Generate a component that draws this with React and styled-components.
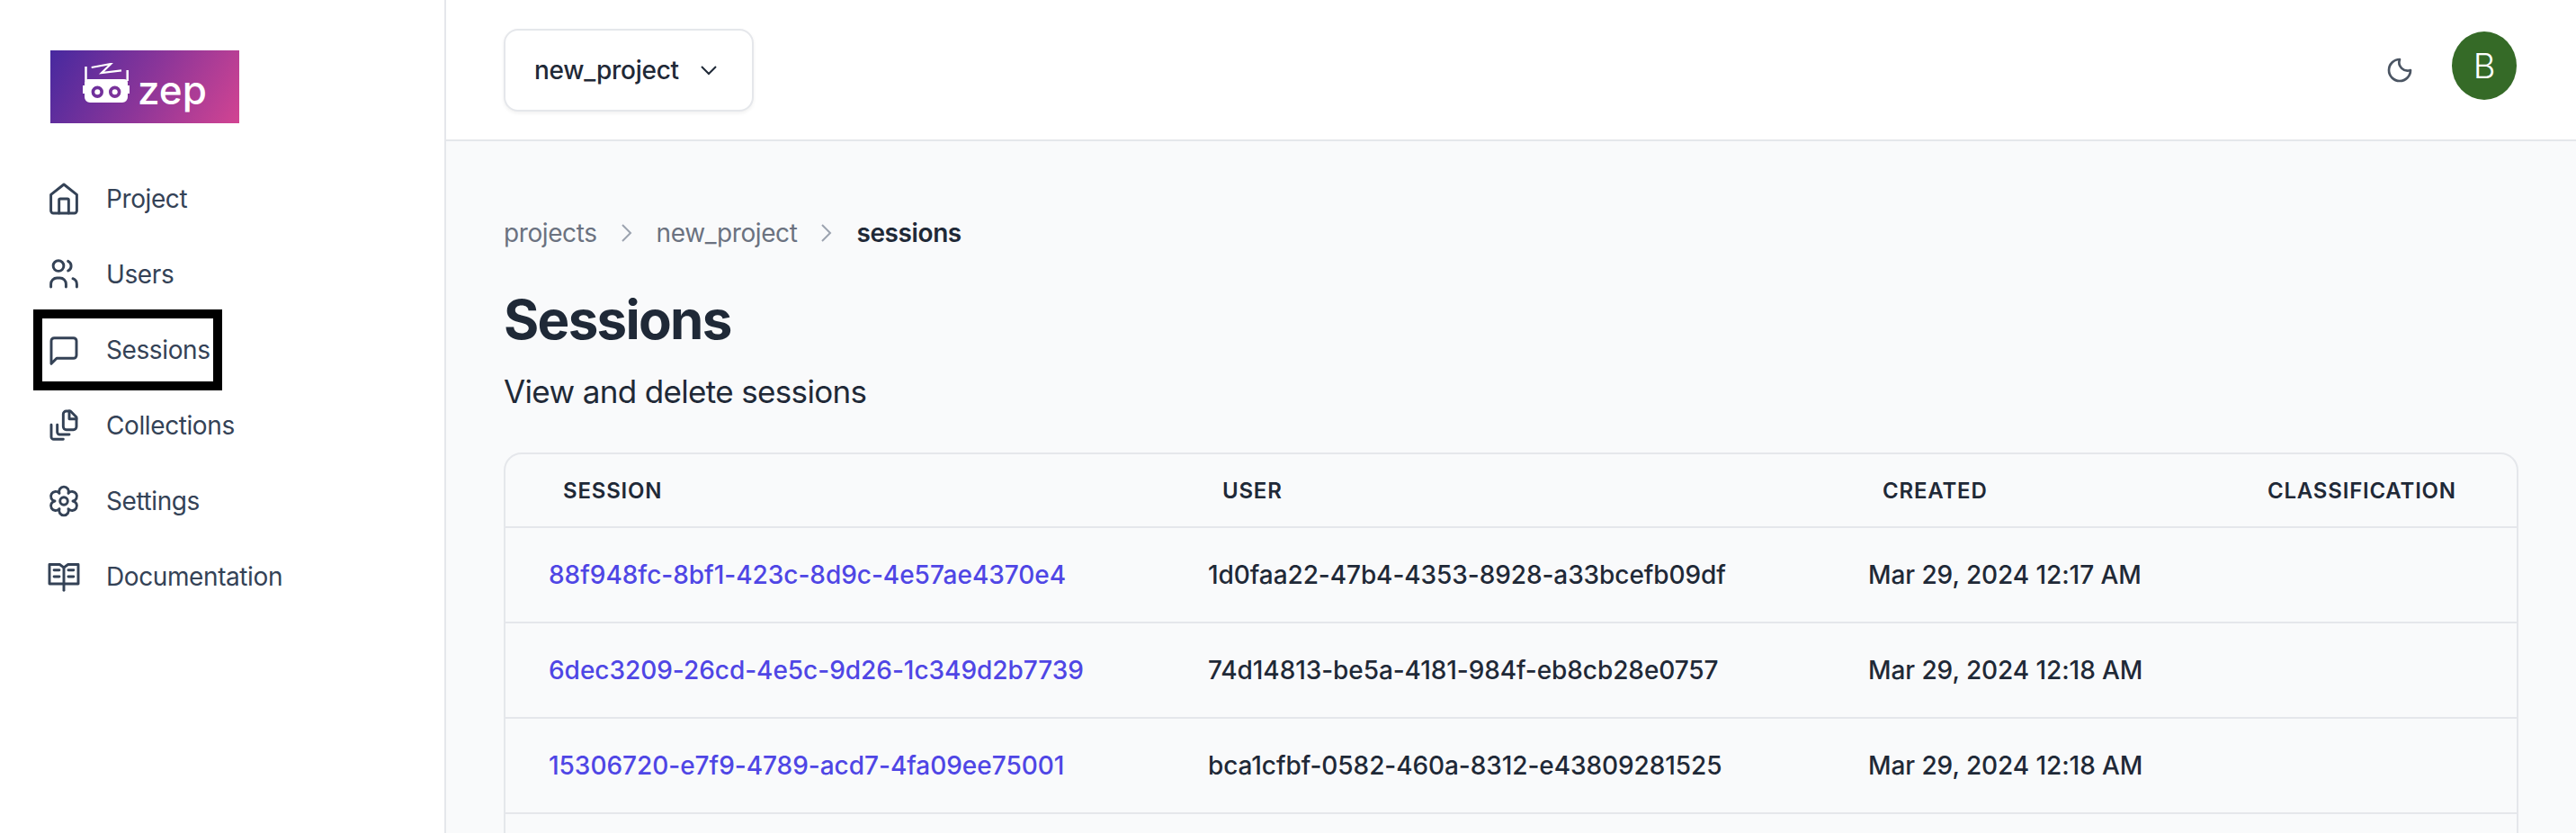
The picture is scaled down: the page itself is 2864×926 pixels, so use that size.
import React from 'react';
import styled, { createGlobalStyle } from 'styled-components';

const GlobalStyle = createGlobalStyle`
  html, body {
    margin: 0;
    height: 100%;
    overflow: hidden;
    background: #ffffff;
  }
  body {
    font-family: Inter, "Liberation Sans", sans-serif;
    color: #1f2937;
  }
`;

const Page = styled.div`
  display: flex;
  width: 2864px;
  height: 926px;
  overflow: hidden;
`;

// sidebar
const Sidebar = styled.aside`
  flex: 0 0 496px;
  box-sizing: border-box;
  height: 100%;
  padding: 56px 0 0 56px;
  background: #ffffff;
  border-right: 2px solid #e5e7eb;
`;

const Logo = styled.div`
  display: flex;
  align-items: flex-start;
  box-sizing: border-box;
  width: 210px;
  height: 81px;
  padding: 0 0 0 36px;
  background: linear-gradient(120deg, #47299f 0%, #8a3599 50%, #d24492 100%);
`;

const LogoMark = styled.svg`
  flex: 0 0 54px;
  width: 54px;
  height: 46px;
  margin-top: 14px;
`;

const LogoWord = styled.span`
  margin: 18px 0 0 7px;
  font-size: 44px;
  line-height: 53px;
  font-weight: 500;
  letter-spacing: 0;
  color: #ffffff;
`;

const Nav = styled.nav`
  display: flex;
  flex-direction: column;
  margin-top: 42px;
`;

const NavItem = styled.a`
  position: relative;
  display: flex;
  align-items: center;
  gap: 31px;
  height: 84px;
  margin-left: -1px;
  font-size: 28px;
  letter-spacing: -0.4px;
  color: #344256;
`;

const NavIcon = styled.svg`
  flex: 0 0 32px;
  width: 32px;
  height: 36px;
  overflow: visible;
  fill: none;
  stroke: #344256;
  stroke-width: 2.2;
  stroke-linecap: round;
  stroke-linejoin: round;
`;

// annotation drawn on top of the Sessions item
const Highlight = styled.span`
  position: absolute;
  left: -18px;
  top: -3px;
  width: 210px;
  height: 90px;
  box-sizing: border-box;
  border: 10px solid #000000;
`;

// main column
const Main = styled.div`
  flex: 1;
  display: flex;
  flex-direction: column;
  min-width: 0;
  background: #f9fafb;
`;

const TopBar = styled.header`
  flex: 0 0 157px;
  display: flex;
  align-items: flex-start;
  justify-content: space-between;
  box-sizing: border-box;
  padding: 32px 66px 0 64px;
  background: #ffffff;
  border-bottom: 2px solid #e5e7eb;
`;

const ProjectSelect = styled.button`
  display: flex;
  align-items: center;
  gap: 23px;
  box-sizing: border-box;
  width: 278px;
  height: 92px;
  padding: 0 0 0 32px;
  background: #ffffff;
  border: 2px solid #e5e7eb;
  border-radius: 16px;
  box-shadow: 0 2px 4px rgba(0, 0, 0, 0.06);
  font-family: inherit;
  font-size: 28px;
  font-weight: 500;
  letter-spacing: -0.25px;
  color: #1f2937;
`;

const TopActions = styled.div`
  display: flex;
  align-items: flex-start;
  gap: 42px;
`;

const MoonIcon = styled.svg`
  width: 32px;
  height: 32px;
  margin-top: 30px;
  fill: none;
  stroke: #4b5563;
  stroke-width: 2;
  stroke-linecap: round;
  stroke-linejoin: round;
`;

const Avatar = styled.div`
  display: flex;
  align-items: center;
  justify-content: center;
  width: 72px;
  height: 76px;
  margin-top: 3px;
  border-radius: 50%;
  background: #356a27;
  color: #ffffff;
  font-size: 38px;
  font-weight: 300;
`;

const Content = styled.main`
  flex: 1;
  min-height: 0;
  padding: 86px 64px 0;
`;

const Breadcrumb = styled.div`
  display: flex;
  align-items: center;
  gap: 26px;
  height: 32px;
  font-size: 28px;
  letter-spacing: -0.4px;
  color: #6b7280;
`;

const Crumb = styled.span`
  color: ${(p) => (p.$current ? '#1f2937' : '#6b7280')};
  font-weight: ${(p) => (p.$current ? 600 : 400)};
`;

const CrumbSep = styled.svg`
  width: 14px;
  height: 22px;
  fill: none;
  stroke: #9ca3af;
  stroke-width: 2;
`;

const Title = styled.h1`
  margin: 44px 0 0;
  font-size: 60px;
  line-height: 72px;
  font-weight: 700;
  letter-spacing: -1.7px;
  color: #1f2937;
`;

const Subtitle = styled.p`
  margin: 22px 0 0;
  font-size: 35px;
  line-height: 44px;
  letter-spacing: -0.65px;
  color: #1f2937;
`;

const Table = styled.section`
  margin-top: 46px;
  border: 2px solid #e5e7eb;
  border-radius: 20px 20px 0 0;
`;

const Row = styled.div`
  display: grid;
  grid-template-columns: 733px 734px 428px 341px;
  align-items: center;
  height: ${(p) => (p.$head ? '80px' : '104px')};
  border-top: ${(p) => (p.$head ? 'none' : '2px solid #e5e7eb')};
`;

const HeadCell = styled.div`
  padding-left: 64px;
  font-size: 24px;
  font-weight: 600;
  letter-spacing: 0.8px;
  text-transform: uppercase;
  color: #1f2937;
`;

const Cell = styled.div`
  padding-left: 48px;
  font-size: 28px;
  font-weight: 500;
  letter-spacing: -0.08px;
  color: #1f2937;
`;

const SessionLink = styled.a`
  color: #4f46e5;
  letter-spacing: -0.03px;
`;

const navItems = [
  {
    label: 'Project',
    icon: (
      <>
        <path d="M1.200 10 12 1.500l10.800 8.500v13.500a2 2 0 0 1-2 2H3.200a2 2 0 0 1-2-2z" />
        <path d="M8 25.500v-11a1 1 0 0 1 1-1h6a1 1 0 0 1 1 1v11" />
      </>
    ),
  },
  {
    label: 'Users',
    icon: (
      <>
        <circle cx="7.500" cy="6.400" r="4.400" />
        <path d="M1.200 24v-2.500a5 5 0 0 1 5-5h2.600a5 5 0 0 1 5 5V24" />
        <path d="M15.500 2.500a4.400 4.400 0 0 1 0 8" />
        <path d="M19.500 17a5 5 0 0 1 3.300 4.700V24" />
      </>
    ),
  },
  {
    label: 'Sessions',
    icon: <path d="M1.500 6A2.500 2.500 0 0 1 4 3.500h16A2.500 2.500 0 0 1 22.500 6v12a2.500 2.500 0 0 1-2.500 2.500H6L1.500 25z" />,
  },
  {
    label: 'Collections',
    icon: (
      <>
        <path d="M11.500 4A2.500 2.500 0 0 1 14 1.500h3.500l5 5v8a2.500 2.500 0 0 1-2.500 2.500h-6a2.500 2.500 0 0 1-2.500-2.500z" />
        <path d="M16.500 1.500V8h6" />
        <path d="M6.500 13v6a2 2 0 0 0 2 2h8" />
        <path d="M1.500 13v10a2 2 0 0 0 2 2h8" />
      </>
    ),
  },
  {
    label: 'Settings',
    icon: (
      <>
        <path d="M19.500 13.500A4 4 0 1 0 15.750 7 4 4 0 1 0 8.250 7 4 4 0 1 0 4.500 13.500 4 4 0 1 0 8.250 20 4 4 0 1 0 15.750 20 4 4 0 1 0 19.500 13.500z" />
        <circle cx="12" cy="13.500" r="3.200" />
      </>
    ),
  },
  {
    label: 'Documentation',
    icon: (
      <>
        <path d="M0 3.400h8.500L12 5.900l3.500-2.500H24v16.100H0z" />
        <path d="M12 6v19" />
        <path d="M3.800 8h4.400M3.800 13.500h4.400M15.700 8h4.400M15.700 13.500h4.400" />
      </>
    ),
  },
];

const sessions = [
  ['88f948fc-8bf1-423c-8d9c-4e57ae4370e4', '1d0faa22-47b4-4353-8928-a33bcefb09df', 'Mar 29, 2024 12:17 AM'],
  ['6dec3209-26cd-4e5c-9d26-1c349d2b7739', '74d14813-be5a-4181-984f-eb8cb28e0757', 'Mar 29, 2024 12:18 AM'],
  ['15306720-e7f9-4789-acd7-4fa09ee75001', 'bca1cfbf-0582-460a-8312-e43809281525', 'Mar 29, 2024 12:18 AM'],
];

function ZepMark() {
  return (
    <LogoMark viewBox="0 0 54 46">
      <path d="M3.500 4v16M49.700 8v12" stroke="#fff" strokeWidth="2.500" fill="none" />
      <path d="M9.700 5 31.300 1 21 11 43 8.300" stroke="#fff" strokeWidth="2.200" fill="none" />
      <path
        fillRule="evenodd"
        fill="#fff"
        d="M6 18h40a4 4 0 0 1 4 4v3h2v9h-2v4a6 6 0 0 1-6 6H8a6 6 0 0 1-6-6v-4H0v-9h2v-3a4 4 0 0 1 4-4zM16.300 25.600a6.700 6.700 0 1 0 0 13.400 6.700 6.700 0 0 0 0-13.400zm19.400 0a6.700 6.700 0 1 0 0 13.400 6.700 6.700 0 0 0 0-13.400z"
      />
      <circle cx="16.300" cy="32.300" r="3" fill="#fff" />
      <circle cx="35.700" cy="32.300" r="3" fill="#fff" />
    </LogoMark>
  );
}

function App() {
  return (
    <Page>
      <GlobalStyle />
      <Sidebar>
        <Logo>
          <ZepMark />
          <LogoWord>zep</LogoWord>
        </Logo>
        <Nav>
          {navItems.map((item) => (
            <NavItem key={item.label}>
              <NavIcon viewBox="0 0 24 27">{item.icon}</NavIcon>
              {item.label}
              {item.label === 'Sessions' && <Highlight />}
            </NavItem>
          ))}
        </Nav>
      </Sidebar>
      <Main>
        <TopBar>
          <ProjectSelect>
            new_project
            <svg width="20" height="12" viewBox="0 0 20 12" fill="none" stroke="#1f2937" strokeWidth="2">
              <path d="M2 2l8 8 8-8" />
            </svg>
          </ProjectSelect>
          <TopActions>
            <MoonIcon viewBox="0 0 24 24">
              <path d="M12 3a9 9 0 1 0 9 9 7 7 0 0 1-9-9z" />
            </MoonIcon>
            <Avatar>B</Avatar>
          </TopActions>
        </TopBar>
        <Content>
          <Breadcrumb>
            <Crumb>projects</Crumb>
            <CrumbSep viewBox="0 0 14 22">
              <path d="M2 2l9 9-9 9" />
            </CrumbSep>
            <Crumb>new_project</Crumb>
            <CrumbSep viewBox="0 0 14 22">
              <path d="M2 2l9 9-9 9" />
            </CrumbSep>
            <Crumb $current>sessions</Crumb>
          </Breadcrumb>
          <Title>Sessions</Title>
          <Subtitle>View and delete sessions</Subtitle>
          <Table>
            <Row $head>
              <HeadCell>Session</HeadCell>
              <HeadCell>User</HeadCell>
              <HeadCell>Created</HeadCell>
              <HeadCell>Classification</HeadCell>
            </Row>
            {sessions.map(([id, user, created]) => (
              <Row key={id}>
                <Cell>
                  <SessionLink>{id}</SessionLink>
                </Cell>
                <Cell>{user}</Cell>
                <Cell>{created}</Cell>
                <Cell />
              </Row>
            ))}
            <Row />
          </Table>
        </Content>
      </Main>
    </Page>
  );
}

export default App;
